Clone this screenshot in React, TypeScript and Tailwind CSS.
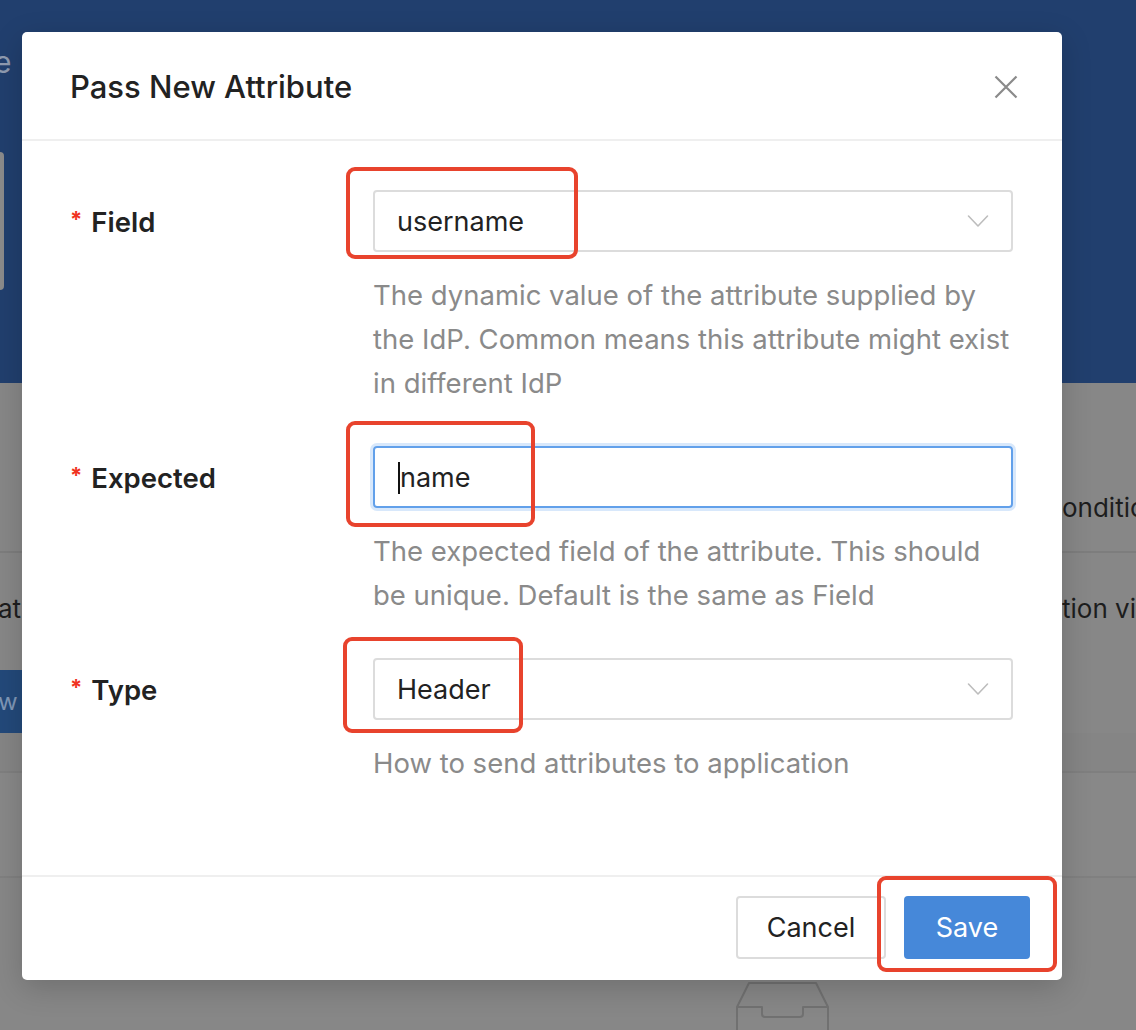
import React from "react";

const font = { fontFamily: "Inter, 'Noto Sans', 'Liberation Sans', sans-serif" };

function Chevron() {
  return (
    <svg width="22" height="14" viewBox="0 0 22 14" fill="none">
      <path d="M1.5 2 L11 12 L20.5 2" stroke="#bdbdbd" strokeWidth="1.6" strokeLinejoin="round" strokeLinecap="round" />
    </svg>
  );
}

function Label({ text }: { text: string }) {
  return (
    <div className="w-[303px] h-[62px] flex items-center shrink-0 pt-[3px]">
      <span className="text-[22px] font-bold text-[#f0331f] mr-[9px] -mt-[6px]">*</span>
      <span className="text-[27.5px] font-semibold text-[#222]">{text}</span>
    </div>
  );
}

function Help({ children }: { children: React.ReactNode }) {
  return <div className="mt-[21px] text-[27.5px] leading-[44px] text-[#8a8a8a]">{children}</div>;
}

function RedBox({ cls }: { cls: string }) {
  return <div className={"absolute border-[4px] border-[#e8432d] rounded-[9px] pointer-events-none " + cls} />;
}

export default function App() {
  return (
    <div className="relative w-[1136px] h-[1030px] overflow-hidden bg-[#878787]" style={font}>
      {/* background page (dimmed) */}
      <div className="h-[383px] bg-[#213f6e] relative">
        <div className="absolute -left-[6px] top-[40px] text-[30px] text-[#8f9bb0]">e</div>
        <div className="absolute -left-[10px] top-[152px] w-[14px] h-[138px] rounded-[4px] bg-[#8b8b8b]" />
      </div>
      <div className="h-[170px] border-b-2 border-[#7d7d7d] flex items-center justify-end pt-[80px]">
        <span className="text-[26px] text-[#1d1d1d] -mr-[30px] w-[104px] overflow-hidden whitespace-nowrap">onditic</span>
      </div>
      <div className="h-[117px] flex items-center justify-between pb-[6px]">
        <span className="text-[26px] text-[#1d1d1d] -ml-[2px]">at</span>
        <span className="text-[26px] text-[#1d1d1d] -mr-[4px] w-[78px] overflow-hidden whitespace-nowrap">tion via</span>
      </div>
      <div className="h-[63px] w-[40px] bg-[#23497a] flex items-center overflow-hidden">
        <span className="text-[24px] text-[#7f97b6] whitespace-nowrap -ml-[2px]">w A</span>
      </div>
      <div className="h-[40px] bg-[#858585] border-b-2 border-[#7f7f7f]" />
      <div className="h-[105px] bg-[#888888] border-b-2 border-[#808080]" />
      <div className="flex justify-start pl-[736px] pt-[104px]">
        <svg width="93" height="50" viewBox="0 0 93 50" fill="none">
          <path d="M1 50 L1 25 L13 1 L80 1 L92 25 L92 50 M1 25 L26 25 L26 32 Q26 35 29 35 L64 35 Q67 35 67 32 L67 25 L92 25" stroke="#717171" strokeWidth="2" strokeLinejoin="round" />
        </svg>
      </div>

      {/* modal */}
      <div className="absolute left-[22px] top-[32px] w-[1040px] h-[948px] bg-white rounded-[5px] shadow-[0_8px_30px_rgba(0,0,0,0.18)] flex flex-col">
        <div className="h-[109px] shrink-0 border-b-2 border-[#efefef] flex items-center justify-between pl-[48px] pr-[44px]">
          <span className="text-[31px] font-medium text-[#222] mt-[4px]">Pass New Attribute</span>
          <svg width="24" height="24" viewBox="0 0 24 24" fill="none" className="mt-[3px]">
            <path d="M1.5 1.5 L22.5 22.5 M22.5 1.5 L1.5 22.5" stroke="#8a8a8a" strokeWidth="2.2" />
          </svg>
        </div>

        <div className="flex-1 pl-[48px] pr-[49px] pt-[49px]">
          <div className="flex">
            <Label text="Field" />
            <div className="flex-1">
              <div className="h-[62px] border-2 border-[#dcdcdc] rounded-[4px] flex items-center justify-between pl-[22px] pr-[22px]">
                <span className="text-[27px] text-[#222] mt-[2px]">username</span>
                <Chevron />
              </div>
              <Help>
                The dynamic value of the attribute supplied by the IdP. Common means this attribute might exist in different IdP
              </Help>
            </div>
          </div>

          <div className="flex mt-[41px]">
            <Label text="Expected" />
            <div className="flex-1">
              <div className="h-[62px] border-2 border-[#62a0ea] rounded-[4px] shadow-[0_0_0_3px_#d8e8fb] flex items-center pl-[23px]">
                <span className="w-[2px] h-[32px] bg-[#111] mt-[2px]" />
                <span className="text-[27px] text-[#222] mt-[2px]">name</span>
              </div>
              <Help>The expected field of the attribute. This should be unique. Default is the same as Field</Help>
            </div>
          </div>

          <div className="flex mt-[41px]">
            <Label text="Type" />
            <div className="flex-1">
              <div className="h-[62px] border-2 border-[#dcdcdc] rounded-[4px] flex items-center justify-between pl-[22px] pr-[22px]">
                <span className="text-[27px] text-[#222] mt-[2px]">Header</span>
                <Chevron />
              </div>
              <Help>How to send attributes to application</Help>
            </div>
          </div>
        </div>

        <div className="h-[105px] shrink-0 border-t-2 border-[#efefef] flex items-start justify-end pt-[19px] pr-[32px] gap-[18px]">
          <button className="w-[150px] h-[63px] border-2 border-[#dcdcdc] rounded-[4px] bg-white text-[27px] text-[#222] pt-[2px]">Cancel</button>
          <button className="w-[126px] h-[63px] rounded-[4px] bg-[#4688d9] text-[27px] text-white pt-[2px]">Save</button>
        </div>

        <RedBox cls="left-[324px] top-[135px] w-[232px] h-[92px]" />
        <RedBox cls="left-[324px] top-[389px] w-[189px] h-[106px]" />
        <RedBox cls="left-[321px] top-[605px] w-[180px] h-[96px]" />
        <RedBox cls="left-[855px] top-[844px] w-[180px] h-[96px]" />
      </div>
    </div>
  );
}
